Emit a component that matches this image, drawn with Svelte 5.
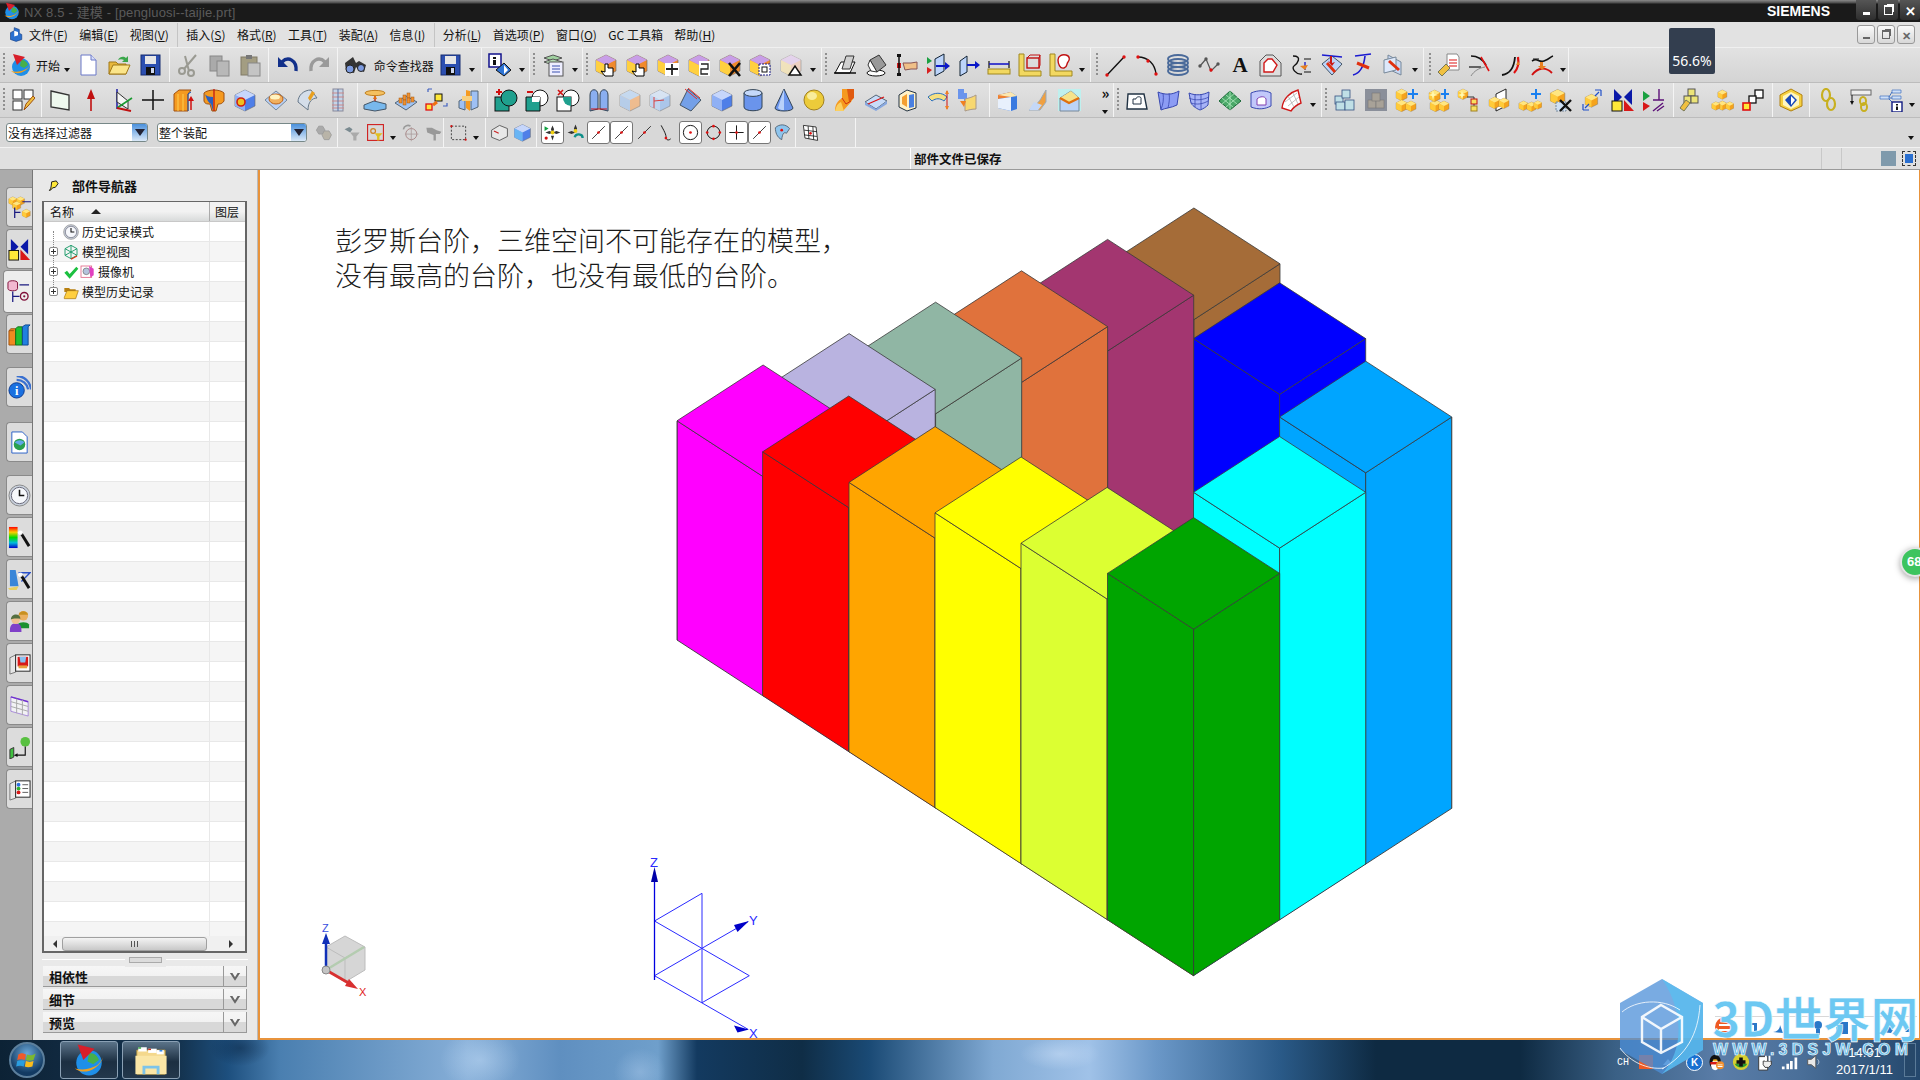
<script lang="ts">
	// icon helpers, everything is drawn on a 24x24 box
	const box = (t, l, r, tf = '') =>
		`<g transform="${tf}"><path d="M12 2 22 7v11l-10 5-10-5V7z" fill="${r}" stroke="#666" stroke-width=".6"/><path d="M2 7l10 5v11l-10-5z" fill="${l}"/><path d="M12 2 22 7 12 12 2 7z" fill="${t}"/></g>`;
	const gold = (tf = '') => box('#ffe680', '#ffcb3a', '#f5a31c', tf);
	const blue = (tf = '') => box('#c6d6fb', '#8fb0f5', '#4f7fe8', tf);
	const vc = (o = '') => box('#c89ee8', '#ffd040', '#f08a2c') + o;
	const line = (d, c = '#000', w = 1.4) => `<path d="${d}" fill="none" stroke="${c}" stroke-width="${w}"/>`;
	const dot = (x, y, c = '#e01010', r = 1.7) => `<circle cx="${x}" cy="${y}" r="${r}" fill="${c}"/>`;
	const wand = `<path d="M14 8l8 13" stroke="#111" stroke-width="3"/><path d="M12 5l2 2-2 2-2-2z" fill="#fff"/><circle cx="13" cy="7" r="2.4" fill="#fff" opacity=".9"/>`;
	const door = (inner) => `<path d="M2 6l6-3v18l-6 2z" fill="#e6e6e6" stroke="#777"/><rect x="8" y="3" width="15" height="17" fill="#fff" stroke="#222"/>${inner}`;

	const I: Record<string, string> = {
		globe: `<circle cx="12" cy="14" r="9" fill="#1f8fe8"/><path d="M12 7c4 0 6 2 7 5l-4 3-4-2z" fill="#47b04a"/><path d="M2 18c6 5 17 1 20-8-2 4-4 6-7 7-4 2-9 2-13 1z" fill="#f0a020"/><path d="M4 1l12 3-8 8z" fill="#d81f2a"/>`,
		newdoc: `<path d="M5 2h10l5 5v15H5z" fill="#fff" stroke="#6a78c8"/><path d="M15 2v5h5" fill="#d8def8" stroke="#6a78c8"/>`,
		open: `<path d="M2 9h7l2 2h8v10H2z" fill="#e8b83c" stroke="#a07818"/><path d="M6 12h17l-4 9H2z" fill="#fbe58a" stroke="#a07818"/><path d="M11 7c2-4 6-4 8-2l2-2v6h-6l2-2c-2-1-4-1-6 0z" fill="#3aa64a"/>`,
		save: `<rect x="3" y="2" width="19" height="20" fill="#2c4fb0" stroke="#162c70"/><rect x="7" y="3" width="11" height="8" fill="#e6e6e6"/><rect x="8" y="14" width="9" height="8" fill="#111"/><rect x="13" y="15" width="3" height="5" fill="#cfd8f0"/>`,
		cut: `<g fill="none" stroke="#9a9a92" stroke-width="2"><circle cx="6" cy="18" r="3"/><circle cx="15" cy="20" r="3"/><path d="M8 16 20 2M13 18 9 3"/></g>`,
		copy: `<rect x="3" y="3" width="12" height="15" fill="#aaa" stroke="#888"/><rect x="10" y="8" width="12" height="15" fill="#b8b8b8" stroke="#888"/>`,
		paste: `<rect x="3" y="4" width="16" height="18" fill="#a39d82" stroke="#807a66"/><rect x="8" y="2" width="6" height="4" fill="#777"/><rect x="10" y="10" width="12" height="13" fill="#c4c4c4" stroke="#888"/>`,
		undo: line('M6 9c6-6 15-2 14 9', '#12308a', 3.4) + `<path d="M2 4v10h10z" fill="#12308a"/>`,
		redo: line('M18 9c-6-6-15-2-14 9', '#9a9a9a', 3.4) + `<path d="M22 4v10H12z" fill="#9a9a9a"/>`,
		binoc: `<path d="M1 10 9 4l3 6 3-2 7 4-2 7-5-2-3-3-2 6-8-2z" fill="#333"/><circle cx="6" cy="16" r="4" fill="#7c9adf" stroke="#222"/><circle cx="17" cy="15" r="3.5" fill="#7c9adf" stroke="#222"/>`,
		info: `<rect x="1" y="1" width="12" height="13" fill="#fff" stroke="#11118a" stroke-width="1.5"/><path d="M5 4h3v2H5zM5 7h3v5H5z" fill="#111"/><path d="M16 10l7 7-7 6-8-6z" fill="#2e74d6" stroke="#111"/><path d="M16 12l4 5-4 4z" fill="#fff"/>`,
		layers: `<path d="M3 5l9-3 9 3-9 3z" fill="#9fd09f" stroke="#555"/><path d="M3 9l9-3 9 3-9 3z" fill="#b7dcb7" stroke="#555"/><rect x="8" y="9" width="14" height="14" fill="#eef" stroke="#555"/>${line('M11 13h8M11 16h8M11 19h8', '#3a50b0', 1.2)}`,
		vhand: vc(`<path d="M11 11h3v4h5v8h-8l-4-5 4 1z" fill="#fff" stroke="#000"/>`),
		vmove: vc(`<rect x="9" y="10" width="14" height="13" fill="#fff"/>${line('M16 11v11M10 16h12', '#222', 1.8)}`),
		vswap: vc(`<rect x="12" y="8" width="11" height="15" fill="#fff"/>${line('M14 11h7v5h-7v5h7', '#222', 1.3)}`),
		vx: vc(line('M11 10l11 13M22 10 11 23', '#111', 2.6)),
		vsel: vc(`<rect x="11" y="11" width="11" height="11" fill="#fff" stroke="#1a1a8a" stroke-dasharray="2 1"/><rect x="14" y="14" width="5" height="5" fill="none" stroke="#111"/>`),
		vtri: `<g opacity=".6">${box('#e8ccf6', '#ffe8a8', '#f8c8b0')}</g><path d="M10 22l6-9 6 9z" fill="#fff" stroke="#111" stroke-width="1.5"/>`,
		prism1: `<path d="M2 20 8 9h14l-5 11z" fill="#fff" stroke="#111"/><path d="M13 3h8l-4 13h-8z" fill="#d0d0d0" stroke="#333"/>${line('M1 20h22')}`,
		prism2: `<ellipse cx="12" cy="20" rx="9" ry="3" fill="#fff" stroke="#111"/><path d="M6 7 15 2l7 10-9 7z" fill="#999" stroke="#333"/><path d="M6 7l7 12-6-1-3-6z" fill="#fff" stroke="#333"/>`,
		pick: `<rect x="2" y="1" width="4" height="3" fill="#111"/><rect x="2" y="10" width="4" height="5" fill="#d01818"/><rect x="2" y="20" width="4" height="3" fill="#111"/>${line('M4 4v16')}<path d="M8 10h8l6-1v7h-6l-6 1z" fill="#f0c088" stroke="#855"/>`,
		parr: `<path d="M9 6 18 1v17l-9 5z" fill="#bcd4fa" stroke="#123"/><path d="M1 4l5 4-5 3z" fill="#1aa040"/><path d="M1 14l5 3-5 4z" fill="#d82020"/><path d="M10 12h9v-3l5 4-5 4v-3h-9z" fill="#0a18c8"/>`,
		parr2: `<path d="M3 8 10 3v16l-7 4z" fill="#bcd4fa" stroke="#123"/><path d="M10 11h8V8l5 4-5 4v-3h-8z" fill="#0a18c8"/>`,
		meas: line('M2 8v7M22 8v7', '#111', 1.2) + `<path d="M2 11h20" stroke="#1a1ac8" stroke-width="1.6"/><rect x="1" y="16" width="22" height="5" fill="#f2d860" stroke="#a08820"/>`,
		rul1: `<path d="M1 1h5v17h17v5H1z" fill="#f2d860" stroke="#a08820"/><rect x="9" y="5" width="12" height="10" fill="none" stroke="#c01010" stroke-width="1.4"/><path d="M9 5l3-3h10v10l-1 3M21 5l1-3" fill="none" stroke="#c01010"/>`,
		rul2: `<path d="M1 1h5v17h17v5H1z" fill="#f2d860" stroke="#a08820"/><path d="M9 7c0-4 4-6 8-5s4 5 2 7 0 5-4 6-6-4-6-8z" fill="#fff" stroke="#c01010" stroke-width="1.4"/>`,
		lin: line('M3 22 20 4', '#111', 1.4) + dot(3, 22) + dot(20, 4),
		arc: line('M3 4c10 0 17 7 18 17', '#111', 1.4) + dot(3, 4) + dot(21, 21) + dot(13, 8),
		spring: `<g fill="none" stroke="#4a6a9a" stroke-width="1.8"><ellipse cx="12" cy="6" rx="10" ry="4"/><ellipse cx="12" cy="10" rx="10" ry="4"/><ellipse cx="12" cy="14" rx="10" ry="4"/><ellipse cx="12" cy="18" rx="10" ry="4"/></g>`,
		pts: line('M3 13 9 6l5 12 7-7', '#555', 1.2) + dot(9, 6, '#555') + dot(3, 13, '#555') + dot(14, 17) + dot(21, 11, '#555'),
		txt: `<text x="12" y="19" font-family="Liberation Serif" font-weight="700" font-size="21" text-anchor="middle" fill="#111">A</text>`,
		shp: `<path d="M2 8 8 2h7l8 8v13H2z" fill="#ddd" stroke="#555"/><path d="M6 10l4-4h4l5 6-4 7H6z" fill="#fff" stroke="#d01818" stroke-width="1.4"/>`,
		crv1: line('M4 3c10 0 4 8 1 10s2 9 8 8', '#111', 1.4) + line('M15 6h7M15 19h7', '#111', 1) + line('M16 9v8', '#2020c8') + `<path d="M11 13l5 4 3-5z" fill="#e88020"/>`,
		crv2: `<path d="M2 11 12 3l10 8-10 11z" fill="#bcd4fa" stroke="#456"/>${line('M2 2 22 4', '#1a1ad0', 1.6)}${line('M7 10l8 9', '#e03010', 2.8)}<path d="M10 3v6l-2-1 4 5 3-4-3 1V3z" fill="#c81818"/>`,
		crv3: line('M4 3 20 1M2 22C10 20 13 12 14 3', '#1a1ad0', 1.6) + line('M6 10 18 15', '#e03010', 3),
		crv4: `<path d="M6 2l13 7v13L6 16z" fill="#c8d8f4" stroke="#789"/><path d="M2 7l12-3v13L2 20z" fill="#dde8fa" stroke="#789"/>${line('M7 8l10 9', '#e03010', 3)}`,
		wrdoc: `<path d="M10 1h10l2 3v13H10z" fill="#fff" stroke="#888"/>${line('M12 7h8M12 10h8M12 13h8', '#e88', 2)}<path d="M1 19l8-8 4 4-8 8z" fill="#f0c040" stroke="#775"/>`,
		cv1: line('M3 3c8 0 12 4 15 9', '#111', 1.6) + line('M1 14h12', '#111', 1.2) + line('M3 23c3-5 8-8 14-9', '#888', 1) + line('M13 4l8 14', '#e01010', 1.6),
		cv2: line('M3 22c8-1 12-7 13-18', '#111', 1.8) + line('M19 4c1 6 0 12-4 16', '#e01010', 2.2) + `<path d="M19 8l2 4-4 0z" fill="#e88020"/>`,
		cv3: line('M2 8c6-4 6 2 12 0s6-4 9-5', '#111', 1.6) + line('M2 22C8 14 16 14 22 20', '#d01010', 1.8) + line('M3 6h6', '#111', 1) + `<path d="M10 9h3v4h3l-4 4-4-4h2z" fill="#e88020"/>`,
		layout: `<rect x="2" y="2" width="9" height="9" fill="#fff" stroke="#333"/><rect x="13" y="2" width="9" height="9" fill="#fff" stroke="#333"/><rect x="2" y="13" width="9" height="9" fill="#fff" stroke="#333"/><path d="M13 22l2-6 7-8 2 2-7 8z" fill="#f0c040" stroke="#a05010"/>`,
		plane: `<path d="M3 3l18 4v15L3 19z" fill="#eef8ee" stroke="#333" stroke-width="1.3"/>`,
		vec: `<path d="M12 23V8" stroke="#c01010" stroke-width="1.6"/><path d="M12 1l4 10H8z" fill="#c01010"/>`,
		csys: line('M7 1v20', '#1010a0', 1.4) + `<path d="M7 4 18 13v8L7 14z" fill="#f4f4f4" stroke="#333"/>${line('M7 20 22 10', '#1a9a30', 1.6)}${line('M7 20l14 3', '#c01010', 1.8)}`,
		plus: line('M12 2v20M1 12h22', '#111', 1.5),
		ext: `<path d="M2 6 7 2h12l-3 4v17H2z" fill="#f59a20" stroke="#a05010"/><path d="M6 6v17M11 6v17" stroke="#ffd050"/>${line('M19 4 16 6v17', '#1a50b0', 1)}<path d="M19 22V12" stroke="#d01010" stroke-width="1.5"/><path d="M19 8l3 5h-6z" fill="#d01010"/>`,
		rev: `<path d="M2 5c4-4 16-4 20 0v8c-2 3-4 3-6 3l-2 7h-4l-2-7c-3 0-5 0-6-3z" fill="#f59a20" stroke="#a05010"/><path d="M2 5c2 1 2 8 7 11l2 7V9C7 9 4 8 2 5z" fill="#2a60c0"/>${line('M12 1v22', '#c01010', 1.2)}`,
		hole: blue() + `<circle cx="8" cy="14" r="4" fill="#f0c020" stroke="#d02010" stroke-width="1.6"/>`,
		boss: `<path d="M1 12 12 3l11 9-11 10z" fill="#b8d2fa" stroke="#789"/><ellipse cx="12" cy="11" rx="7" ry="5" fill="#f0b060" stroke="#c06010"/><ellipse cx="11" cy="9" rx="5" ry="2.5" fill="#fff3c0"/>`,
		fan: `<path d="M3 14c0-7 6-12 13-12l6 8c-5 0-9 4-9 12z" fill="#d4deea" stroke="#678"/><path d="M13 10l4-7 3 2-5 8z" fill="#e8a020"/>`,
		screw: `<rect x="7" y="1" width="10" height="22" fill="#c4d4e8" stroke="#889"/>${line('M6 5h12M6 9h12M6 13h12M6 17h12M6 20h12', '#cc8888', 1)}${line('M12 1v22', '#5a70a0', 1)}`,
		plate: `<ellipse cx="12" cy="5" rx="10" ry="2.6" fill="#f4c060" stroke="#c08020"/>${line('M12 8v6', '#d02010')}<path d="M12 7l2 4h-4z" fill="#e07010"/><path d="M1 17l10-4 12 3v5l-11 2-11-2z" fill="#78b8ec" stroke="#456"/>`,
		pegs: `<path d="M1 15 12 8l11 6-11 8z" fill="#a0c4f4" stroke="#567"/><g fill="#f09030" stroke="#a05810" stroke-width=".5"><rect x="5" y="10" width="3" height="5"/><rect x="9" y="7" width="3" height="5"/><rect x="13" y="5" width="3" height="5"/><rect x="9" y="12" width="3" height="5"/><rect x="13" y="10" width="3" height="5"/><rect x="17" y="9" width="3" height="5"/></g>`,
		pat: `<rect x="10" y="6" width="7" height="7" fill="#ffe838" stroke="#111"/><rect x="1" y="16" width="6" height="6" fill="#ffe838" stroke="#e01010" stroke-width="1.3"/><path d="M8 17l4-3" stroke="#f07010" stroke-width="3"/>${line('M3 1h4M3 1v3M18 18h4v-3', '#4060c0', 1.2)}`,
		mir: `<path d="M3 13l6-3v12l-6-2z" fill="#9ec0f4" stroke="#567"/><path d="M15 3h7v16l-7 3z" fill="#9ec0f4" stroke="#567"/><path d="M10 2l4 1v20l-4-3z" fill="#f59a20"/><path d="M6 8h10v5H6z" fill="#f8d080"/>`,
		bunite: `<rect x="1" y="9" width="14" height="14" fill="#1fa08e" stroke="#111"/><circle cx="15" cy="10" r="8" fill="#1fa08e" stroke="#111"/>${line('M5 1v6M2 4h6', '#d01010', 2)}`,
		bsub: `<circle cx="15" cy="10" r="8" fill="#fff" stroke="#111"/><path d="M1 9h14v14H1z" fill="#1fa08e" stroke="#111"/><path d="M7 9h8v1a8 8 0 0 1-1 4l-7 0z" fill="#fff"/>${line('M2 4h6', '#d01010', 2)}`,
		bint: `<circle cx="15" cy="10" r="8" fill="#fff" stroke="#111"/><rect x="1" y="9" width="14" height="14" fill="#fff" stroke="#111"/><path d="M7 9h8v9a8 8 0 0 1-8-9z" fill="#1fa08e"/>${line('M2 2l5 5M7 2 2 7', '#d01010', 1.6)}`,
		shell: `<path d="M3 23V7c0-7 8-7 8 0v14zM13 21V7c0-7 8-7 8 0v16z" fill="#8aaef0" stroke="#345"/>${line('M4 21h16', '#d01010', 1)}`,
		boxo: `<g opacity=".7">${box('#bcd8f8', '#a8c8f0', '#f8b070')}</g>`,
		boxt: `<g opacity=".75">${box('#d6e6fa', '#b8d4f8', '#9cc0f0')}</g>${line('M6 9v11M6 13l10-1', '#d84040', 1)}`,
		wedge: `<path d="M9 1l13 11-10 11L1 17z" fill="#74a0e8" stroke="#456"/>${line('M6 1l12 10M9 0l12 10', '#e03030', 1)}`,
		cube: blue(),
		cyl: `<path d="M3 5v14c0 5 18 5 18 0V5z" fill="#6a94ec" stroke="#345"/><ellipse cx="12" cy="5" rx="9" ry="3.4" fill="#c4d8fa" stroke="#345"/>`,
		cone: `<path d="M12 1 3 20c0 4 18 4 18 0z" fill="#6a94ec" stroke="#345"/><path d="M12 1 6 20c3 2 3 2 6 2z" fill="#b8d0fa"/>`,
		sph: `<circle cx="12" cy="12" r="10" fill="#eccb3a" stroke="#a08020"/><ellipse cx="10" cy="8" rx="5" ry="4" fill="#f8ec9c"/>`,
		swp: `<path d="M9 1h12v8l-3 5-8 9H2c0-7 3-10 7-13z" fill="#f59a20"/><path d="M14 1h7v9l-5 4z" fill="#e05a10"/><path d="M9 10l4 6 5-3" fill="none" stroke="#d03010"/><path d="M2 23c1-5 3-8 6-9l3 9z" fill="#fbd060"/>`,
		cut2: `<path d="M1 14 12 7l11 6-11 8z" fill="#c8dcf8" stroke="#567"/><path d="M1 14v3l11 6 11-7v-3l-11 8z" fill="#88a8e0"/>${line('M4 16 20 9', '#e01010', 1.2)}`,
		shl2: `<path d="M4 7l8-5 9 3v15l-9 3-8-4z" fill="#fff2c8" stroke="#234"/><path d="M7 9l5-3v13l-5-3z" fill="#f5a030"/><path d="M14 7l5-1v13l-5 1z" fill="#4a80e0"/>`,
		bend: `<path d="M2 9c6-5 14-5 19 0l-3 4c-4-3-8-3-12 0z" fill="#f6e080" stroke="#2a70c0"/>${line('M21 3v18', '#d01010', 1)}<path d="M21 2l2 4h-4zM21 22l2-4h-4z" fill="#f08020"/>`,
		flg: `<path d="M2 1h6v10H2zM8 5h3v8H8z" fill="#6a94ec"/><path d="M9 11c4-1 8-2 11-4v14c-4 0-8 1-11 2z" fill="#f8d870" stroke="#a98"/><path d="M4 13h6l-2 6z" fill="#f08020"/>`,
		bl1: `<path d="M3 7 16 4l6 4v13l-6 2-13-3z" fill="#3a7ae0"/><path d="M3 7 16 4v5L3 11z" fill="#f08030"/><path d="M3 7l13-3 6 4-6 1z" fill="#fbe7b0"/><path d="M3 11l13-2v14l-13-3z" fill="#e8f0fc"/>`,
		bl2: `<path d="M20 2v12l-6 8H3l7-6c4-2 6-8 10-14z" fill="#f0a040" stroke="#9ab"/><path d="M3 22l5-8 8 3-4 5z" fill="#c4d8f8"/>`,
		bl3: `<rect x="1" y="1" width="23" height="22" fill="#bff0ee"/><path d="M3 10 14 3l8 7v13H3z" fill="#bcd4f8" stroke="#789"/><path d="M3 10 14 3l8 7-10 5z" fill="#f6e38a"/><path d="M3 10l9 5 10-5" stroke="#e07010" stroke-width="2.4" fill="none"/>`,
		sf1: `<path d="M3 6h16l3 15H2z" fill="#fff" stroke="#234" stroke-width="1.4"/><path d="M8 16v-5h3c0-3 6-3 5 0v5z" fill="none" stroke="#234"/>`,
		sf2: `<path d="M2 4c7 3 14 3 21-1l-2 14c-6 3-12 3-16 5z" fill="#8c9cf4" stroke="#3848b0"/>${line('M7 5c1 6 0 12-2 16M13 5c1 6 0 10-1 15', '#3848b0', .8)}`,
		sf3: `<path d="M2 5c7 3 14 2 20-1l-1 13c-2 2-5 4-8 5-5-2-8-5-9-7z" fill="#a8b4f8" stroke="#3848b0"/>${line('M2 10c6 3 14 2 20-1M4 15c6 2 12 1 17-2M8 6l0 13M14 6l0 15', '#3848b0', .8)}`,
		sf4: `<path d="M1 13 12 3l11 10-11 9z" fill="#4aa868" stroke="#1d6a3a"/>${line('M4 10l11 9M8 7l11 9M12 3v19M4 16l13-11M8 19l13-11', '#bff0cc', .7)}`,
		sf5: `<path d="M2 5c7-3 14-3 20 0v13c-6 3-12 4-20 1z" fill="#c2c8fa" stroke="#3848b0"/><path d="M8 11c3-3 8-3 9 0v6H8z" fill="#fff" stroke="#8040b0"/>`,
		sf6: `<path d="M3 20C4 10 12 4 19 2l3 13c-5 2-8 5-10 8z" fill="#fff" stroke="#d01818" stroke-width="1.4"/>${line('M6 14l12-9M9 18l11-9M9 8l6 11M14 5l5 11', '#a8a8a8', .7)}`,
		comp: `<g fill="#bfdfe6" stroke="#345080" stroke-width=".8"><rect x="2" y="8" width="8" height="8"/><rect x="9" y="2" width="8" height="8"/><rect x="3" y="14" width="9" height="8"/><rect x="12" y="12" width="9" height="10"/></g>`,
		compg: `<rect x="1" y="1" width="22" height="22" fill="#8a8f9a"/><g fill="#a8a298" stroke="#777" stroke-width=".6"><rect x="4" y="12" width="8" height="8"/><rect x="12" y="12" width="8" height="8"/><rect x="8" y="5" width="8" height="8"/></g>`,
		gp: gold('translate(0 0) scale(.55)') + gold('translate(0 11) scale(.55)') + gold('translate(10 12) scale(.5)') + `<path d="M13 5h4V1h2v4h4v2h-4v4h-2V7h-4z" fill="#1a80f0"/>`,
		gsp: gold('translate(3 11) scale(.55)') + gold('translate(2 1) scale(.55)') + gold('translate(12 12) scale(.5)') + `<path d="M15 5h3V1h2v4h3v2h-3v4h-2V7h-3z" fill="#1a80f0"/><path d="M7 2l1 4 4 1-4 1-1 4-1-4-4-1 4-1z" fill="#fff9b0"/>`,
		gtr: gold('translate(0 0) scale(.5)') + `<path d="M5 3l1 3 3 1-3 1-1 3-1-3-3-1 3-1z" fill="#fff9b0"/>${line('M10 9h7v12', '#333', 1)}<rect x="14" y="11" width="6" height="5" fill="#f8e060" stroke="#c01010"/><rect x="14" y="18" width="6" height="5" fill="#f8e060" stroke="#a08020"/>`,
		gmr: `<path d="M9 6l10-5v17l-10 5z" fill="#fff" stroke="#222"/>` + gold('translate(1 8) scale(.55)') + gold('translate(11 9) scale(.5)'),
		grow: gold('translate(0 12) scale(.46)') + gold('translate(8 13) scale(.46)') + gold('translate(15 12) scale(.4)') + `<path d="M13 5h4V1h2v4h4v2h-4v4h-2V7h-4z" fill="#1a80f0"/>`,
		gx: gold('translate(0 0) scale(.72)') + `<path d="M7 14h10v9H7z" fill="#cfe0f4" stroke="#789" stroke-dasharray="2 1"/>${line('M11 12l11 11M22 12 11 23', '#111', 2.4)}`,
		gmv: gold('translate(4 5) scale(.62)') + line('M3 22v-6M3 22h6M5 20l4-4', '#2050c8', 1.2) + line('M21 2v6M21 2h-6M19 4l-4 4', '#2050c8', 1.2),
		cons: `<path d="M3 1l8 8-8 8zM21 1l-8 8 8 8z" fill="#0a18a8"/><rect x="1" y="13" width="10" height="10" fill="#ffe838" stroke="#111"/><path d="M13 23V12l10 11z" fill="#d81818"/>`,
		sym: `<path d="M2 3l7 5-7 5z" fill="#1aa040"/><path d="M2 14l7 4-7 5z" fill="#d81818"/>${line('M18 1v11M12 12h11M12 23 22 15M16 23l7-5', '#5c1078', 1.4)}`,
		wgs: `<rect x="9" y="1" width="7" height="7" fill="#ece478" stroke="#555"/><rect x="5" y="8" width="7" height="7" fill="#ece478" stroke="#555"/><rect x="12" y="8" width="7" height="7" fill="#ece478" stroke="#555"/><path d="M1 20l6-8 4 3-6 8z" fill="#f0c040" stroke="#775"/>`,
		gs3: gold('translate(7 1) scale(.45)') + gold('translate(7 12) scale(.45)') + gold('translate(1 13) scale(.4)') + gold('translate(15 13) scale(.4)'),
		gsq: `<rect x="14" y="2" width="8" height="8" fill="#fff" stroke="#111" stroke-width="1.3"/><rect x="8" y="8" width="7" height="7" fill="#fff" stroke="#111" stroke-width="1.3"/><rect x="2" y="15" width="7" height="7" fill="#ffe838" stroke="#e01010" stroke-width="1.6"/>`,
		hexb: `<path d="M12 1 23 7v11l-11 5-11-5V7z" fill="#f6d040" stroke="#b08010"/><path d="M12 4 20 8v9l-8 4-8-4V8z" fill="#fff6c0"/><path d="M12 6l6 6-6 7-6-7z" fill="#1848b8"/><path d="M12 8l4 4-4 5z" fill="#fff"/>`,
		chain: `<g fill="none" stroke="#c8b020" stroke-width="2.2"><ellipse cx="9" cy="7" rx="4" ry="6"/><ellipse cx="14" cy="16" rx="4" ry="6"/></g>`,
		chain2: `<rect x="3" y="2" width="20" height="5" fill="#eee" stroke="#666"/>${line('M4 7v8', '#111', 1)}<path d="M2 13h4l-2 4z" fill="#111"/><g fill="none" stroke="#c8b020" stroke-width="2"><ellipse cx="15" cy="13" rx="3" ry="4"/><ellipse cx="16" cy="19" rx="3" ry="4"/></g>`,
		treei: `<path d="M13 2h9v3h-9zM13 8h9v3h-9zM1 8h9v3H1z" fill="#cfe0f8" stroke="#4070c0" stroke-width=".7"/>${line('M10 9l3-5M10 10h3M10 11l4 4', '#4070c0', 1)}<rect x="13" y="14" width="10" height="10" fill="#fff" stroke="#111a80" stroke-width="1.4"/><path d="M17 16h2v1.500h-2zM17 18.500h2V22h-2z" fill="#111"/>`,
		// row 3
		fa: `<path d="M6 4h5l3 5-3 5H6L3 9z" fill="#aaa" stroke="#999"/><path d="M13 10h6l3 5-3 6h-6l-3-6z" fill="#b9b4a8" stroke="#999"/>`,
		ff: `<path d="M2 8l6-3 4 3-3 4z" fill="#7a8a90"/><path d="M9 12h12l-4 5v5h-4v-5z" fill="#aaa"/>`,
		fr: `<rect x="2" y="2" width="20" height="20" fill="none" stroke="#d02020" stroke-width="1.4"/><circle cx="9" cy="10" r="3" fill="none" stroke="#d08020" stroke-width="1.5"/><path d="M11 13h10l-4 4v5h-3v-5z" fill="#e0c020"/>`,
		fc: `<circle cx="13" cy="14" r="7" fill="none" stroke="#aa8888" stroke-width="1.2"/>${line('M13 5v18M5 14h17', '#aa9999', 1)}${line('M3 8c1-5 6-6 9-4', '#999', 2)}`,
		fg: `<path d="M3 6h7l6 3 6 2-2 3h-5v8h-3v-7L4 12z" fill="#999"/>`,
		fb: `<rect x="3" y="4" width="18" height="17" fill="none" stroke="#222" stroke-dasharray="2.500 2"/>${dot(3, 4, '#d01010', 1.4)}${dot(21, 21, '#d01010', 1.4)}`,
		fw: `<path d="M2 9l10-6 10 4v10l-10 5-10-4z" fill="#e8e8e8" stroke="#444"/><path d="M5 10l6 3" stroke="#c82020" stroke-width="1.4"/>`,
		fs: blue() + `<path d="M2 7l10 5v11l-10-5z" fill="#58b8f4" opacity=".7"/>`,
		sn1: `<path d="M12 3l2 5-2 5-2-5zM3 12l5-2 5 2-5 2zM12 12l5-2 5 2-5 2zM10 16h4l-2 6z" fill="#333"/>${dot(12, 12, '#f0d010', 2.4)}<path d="M2 4l5 3-5 3z" fill="#10a040"/>${dot(4, 19, '#d01010', 2)}`,
		sn2: `<path d="M12 2l2 5-2 5-2-5zM2 12l5-2 5 2-5 2z" fill="#333"/>${dot(12, 10, '#f0d010', 2.4)}${line('M11 18c1-5 10-5 10 1', '#10908a', 3)}`,
		sl: line('M4 20 20 4', '#111', 1) + dot(12, 12),
		sc1: line('M4 3c3 6 7 12 6 16', '#111', 1.2) + line('M10 19c1 3 4 3 6 1', '#111', 1.2) + dot(10, 19),
		sc2: line('M12 3v20', '#111', 1.2) + line('M2 18C4 9 20 9 22 18', '#111', 1.2) + dot(12, 11),
		so: `<circle cx="12" cy="12" r="9" fill="none" stroke="#111" stroke-width="1.2"/>${dot(12, 12)}`,
		sq: `<circle cx="12" cy="12" r="8" fill="none" stroke="#111" stroke-width="1.2"/>${dot(12, 4)}${dot(12, 20)}${dot(4, 12)}${dot(20, 12)}`,
		sx: line('M12 3v18M3 12h18', '#111', 1.2) + dot(12, 12),
		sf: `<path d="M3 6c5-5 13-5 18 1l-4 6c-3-2-5 0-6 8-6-3-8-9-8-15z" fill="#8ec4ec" stroke="#456"/>${dot(11, 9)}`,
		grid: `<path d="M3 3l16 2 2 17-16-3z" fill="#fff" stroke="#111"/>${line('M9 4l1 16M15 5l1 16M4 9l16 2M4 15l16 2', '#111', 1)}${dot(12, 13)}`,
		// navigator tabs
		tasm: gold('translate(0 0) scale(.42)') + gold('translate(8 0) scale(.42)') + gold('translate(4 5) scale(.42)') + gold('translate(14 13) scale(.42)') + line('M7 12v11M7 17h6M15 6h9', '#1a1a80', 1.3),
		tpart: `<path d="M1 3c0-3 10-3 10 0v6c0 3-10 3-10 0z" fill="#f2b8d0" stroke="#80103a"/>${line('M6 12v11M6 17h7M13 5h10', '#1a1a80', 1.3)}<circle cx="18" cy="17" r="4" fill="none" stroke="#80103a" stroke-width="1.4"/>${dot(18, 17, '#80103a', 1.2)}`,
		tbook: `<path d="M1 8l2-2h5v17H1zM1 8h5" fill="#f08a20" stroke="#a05010"/><path d="M8 6l2-2h5v19H8z" fill="#20c030" stroke="#107018"/><path d="M15 4l3-2h5l-2 2v19h-6z" fill="#2080e0" stroke="#104890"/>`,
		twifi: `<circle cx="9" cy="15" r="8" fill="#1a70e0" stroke="#0a3a90"/><text x="9" y="20" font-family="Liberation Serif" font-weight="700" font-size="13" text-anchor="middle" fill="#fff">i</text>${line('M9 4c6 0 11 4 12 10', '#3a70d0', 2.4)}${line('M9 0c8 0 14 6 15 14', '#3a70d0', 2.4)}`,
		tweb: `<path d="M4 1h11l5 5v17H4z" fill="#fff" stroke="#2a60c8"/><circle cx="12" cy="14" r="6" fill="#2aa050"/><path d="M7 12c3-3 8-3 10 0l-4 3z" fill="#60a8e8"/>`,
		clock: `<circle cx="12" cy="12" r="11" fill="#c8d0dc" stroke="#888"/><circle cx="12" cy="12" r="8.500" fill="#f6f8fc" stroke="#667"/>${line('M12 6v6h5', '#111', 1.6)}`,
		trb: `<defs><linearGradient id="rbw" x1="0" y1="0" x2="0" y2="1"><stop offset="0" stop-color="#f00"/><stop offset=".25" stop-color="#fc0"/><stop offset=".5" stop-color="#0d0"/><stop offset=".75" stop-color="#0bd"/><stop offset="1" stop-color="#00c"/></linearGradient></defs><rect x="1" y="1" width="9" height="22" fill="url(#rbw)"/>${wand}`,
		tbw: `<path d="M2 2h6l3 17H2z" fill="#3a86d8"/><path d="M0 21l11-2-2 4H2z" fill="#e8d060"/>${line('M11 5h12L14 14', '#2a50c8', 1.4)}${wand}`,
		tppl: `<circle cx="16" cy="6" r="5" fill="#eab060"/><path d="M11 5c1-5 9-5 10 0z" fill="#c89020"/><path d="M10 15c2-3 10-3 12 0v4H10z" fill="#1a9030"/><path d="M2 21c0-5 2-7 6-7s6 2 6 7v2H2z" fill="#8040c8"/><circle cx="8" cy="10" r="4.500" fill="#f0c090"/><path d="M3 10c0-7 10-7 10-1-3 0-7-1-10 1z" fill="#557040"/>`,
		tdr: door(`<rect x="10" y="5" width="11" height="10" fill="#d81818"/><path d="M12 5h7l-1 6h-5z" fill="#8ac0f0"/><rect x="11" y="14" width="9" height="3" fill="#e8a040"/>`),
		tgr: `<path d="M3 3l18 5v15L3 18z" fill="#f2f2f4" stroke="#8050d0" stroke-width=".6"/>${line('M3 3l18 5', '#7030d0', 1.6)}${line('M3 8l18 5M3 13l18 5M9 5v15M15 6v16', '#a8a8a8', 1)}`,
		tdg: `<path d="M2 14l4-2v10l-4 2z" fill="#40c040" stroke="#333"/><circle cx="18" cy="6" r="5" fill="#58c040"/>${line('M18 11v9H9', '#111', 1.2)}<path d="M6 20l4-2v4z" fill="#111"/>`,
		tdl: door(`${dot(11, 7, '#2a70e0', 2)}${dot(11, 11, '#30b030', 2)}${dot(11, 15, '#d81818', 2)}${line('M15 7h6M15 11h6M15 15h6', '#333', .8)}`),
		tcube: `<g fill="none" stroke="#1a9a68" stroke-width="1.4"><path d="M12 2 21 7v10l-9 5-9-5V7z"/><path d="M3 7l9 5 9-5M12 12v10M12 2v10M3 17l9-5 9 5"/></g>${line('M12 23l9-5', '#e03010', 1.8)}`,
		tcam: `<rect x="3" y="3" width="16" height="17" fill="#fff" stroke="#e06080" stroke-width="1.2"/><circle cx="11" cy="11" r="5" fill="#b4c4dc" stroke="#666"/><path d="M15 3l7 4v10l-5 3z" fill="#e040c0"/>`,
		tfold: `<path d="M2 6h7l2 2h8v4H2z" fill="#b88010"/><path d="M2 20l4-10h17l-4 12H2z" fill="#ffcf40" stroke="#a07010"/>`,
		check: `<path d="M2 13l4-3 4 5L20 4l3 3L10 22z" fill="#1cc040"/>`
	};

	// toolbar layout, x positions come from the group widths
	const row1 = [
		{ w: 170, pad: 0, grip: true, items: ['N:globe', 'T:开始', '^', 'newdoc', 'open', 'save'] },
		{ w: 99, pad: 3, items: ['cut', 'copy', 'paste'] },
		{ w: 69, pad: 4, items: ['undo', 'redo'] },
		{ w: 144, pad: 3, items: ['binoc', 'T:命令查找器', 'save', '^'] },
		{ w: 48, pad: 3, items: ['info', '^'] },
		{ w: 53, pad: 0, grip: true, items: ['layers', '^'] },
		{ w: 239, pad: 0, grip: true, items: ['vhand', 'vhand', 'vmove', 'vswap', 'vx', 'vsel', 'vtri', '^'] },
		{ w: 269, pad: 0, grip: true, items: ['prism1', 'prism2', 'pick', 'parr', 'parr2', 'meas', 'rul1', 'rul2', '^'] },
		{ w: 333, pad: 2, grip: true, items: ['lin', 'arc', 'spring', 'pts', 'txt', 'shp', 'crv1', 'crv2', 'crv3', 'crv4', '^'] },
		{ w: 145, pad: 2, grip: true, items: ['wrdoc', 'cv1', 'cv2', 'cv3', '^'] }
	];
	const row2 = [
		{ w: 42, pad: 0, grip: true, items: ['layout'] },
		{ w: 316, pad: 3, items: ['plane', 'vec', 'csys', 'plus', 'ext', 'rev', 'hole', 'boss', 'fan', 'screw'] },
		{ w: 130, pad: 2, items: ['plate', 'pegs', 'pat', 'mir'] },
		{ w: 502, pad: 3, items: ['bunite', 'bsub', 'bint', 'shell', 'boxo', 'boxt', 'wedge', 'cube', 'cyl', 'cone', 'sph', 'swp', 'cut2', 'shl2', 'bend', 'flg'] },
		{ w: 124, pad: 2, items: ['bl1', 'bl2', 'bl3', '>>'] },
		{ w: 208, pad: 0, grip: true, items: ['sf1', 'sf2', 'sf3', 'sf4', 'sf5', 'sf6', '^'] },
		{ w: 352, pad: 0, grip: true, items: ['comp', 'compg', 'gp', 'gsp', 'gtr', 'gmr', 'grow', 'gx', 'gmv', 'cons', 'sym'] },
		{ w: 99, pad: 2, items: ['wgs', 'gs3', 'gsq'] },
		{ w: 37, pad: 3, items: ['hexb'] },
		{ w: 110, pad: 4, noline: true, items: ['chain', 'chain2', 'treei', '^'] }
	];
	const row3 = [
		{ w: 106, pad: 2.5, items: ['ff', 'fr', '^', 'fc', 'fg'] },
		{ w: 42, pad: 2.5, items: ['fb', '^'] },
		{ w: 51, pad: 1.5, items: ['fw', 'fs'] },
		{ w: 259, pad: 3.5, items: ['+sn1', 'sn2', '+sl', '+sl', 'sl', 'sc1', '+so', 'sq', '+sx', '+sl', 'sf'] },
		{ w: 60, pad: 2.5, items: ['grid'] }
	];
	const menus = [
		['文件', 'F'], ['编辑', 'E'], ['视图', 'V'], null,
		['插入', 'S'], ['格式', 'R'], ['工具', 'T'], ['装配', 'A'], ['信息', 'I'], null,
		['分析', 'L'], ['首选项', 'P'], ['窗口', 'O'], ['GC 工具箱', ''], ['帮助', 'H']
	];
	const tabs = [
		{ i: 'tasm' }, { i: 'cons' }, { i: 'tpart', active: true }, { i: 'tbook' },
		{ i: 'twifi', gap: true }, { i: 'tweb', gap: true, wide: true }, { i: 'clock', gap: true },
		{ i: 'trb' }, { i: 'tbw' }, { i: 'tppl' }, { i: 'tdr' }, { i: 'tgr' }, { i: 'tdg' }, { i: 'tdl' }
	];
	const tree = [
		{ label: '历史记录模式', icons: ['clock'] },
		{ label: '模型视图', icons: ['tcube'], exp: true },
		{ label: '摄像机', icons: ['check', 'tcam'], exp: true },
		{ label: '模型历史记录', icons: ['tfold'], exp: true }
	];
	const rows = Array.from({ length: 36 }, (_, i) => tree[i] || null);

	// penrose stairs, painted back to front. x,y is the left corner of the top face
	const W = 86.1;
	const H = 55.8;
	const towers = [
		{ c: '#a56c38', x: 1107.8, y: 263.8 },
		{ c: '#0000ff', x: 1193.5, y: 338.6 },
		{ c: '#00a5ff', x: 1279.6, y: 417 },
		{ c: '#a33670', x: 1021.5, y: 295.2 },
		{ c: '#e0723c', x: 935.4, y: 326.6 },
		{ c: '#90b6a4', x: 849.5, y: 358 },
		{ c: '#b9b3e0', x: 763, y: 389.4 },
		{ c: '#ff00ff', x: 677, y: 420.8 },
		{ c: '#ff0000', x: 762.6, y: 451.8 },
		{ c: '#ffa500', x: 849, y: 482.4 },
		{ c: '#ffff00', x: 935, y: 512.8 },
		{ c: '#dcff32', x: 1021, y: 543.2 },
		{ c: '#00ffff', x: 1193.5, y: 492.3 },
		{ c: '#00a500', x: 1107.5, y: 573.4 }
	];
	const pts = (a) => a.map((p) => p.join(',')).join(' ');
	const faces = (t) => {
		const L = [t.x, t.y], T = [t.x + W, t.y - H], R = [t.x + 2 * W, t.y], B = [t.x + W, t.y + H];
		return {
			top: pts([L, T, R, B]),
			left: pts([L, B, [B[0], 1100], [L[0], 1100]]),
			right: pts([B, R, [R[0], 1100], [B[0], 1100]])
		};
	};
	const outline = '677,100 677,640 1193.4,975.7 1451.8,808.3 1451.8,100';
</script>

{#snippet icon(name)}
	<svg class="ico" viewBox="0 0 24 24">{@html I[name]}</svg>
{/snippet}

{#snippet toolbar(groups, small)}
	{#each groups as g}
		<div class="tb-group" class:noline={g.noline} style="width:{g.w}px;padding-left:{g.pad}px">
			{#if g.grip}<span class="grip"></span>{/if}
			{#each g.items as it}
				{#if it === '^'}
					<span class="caret"></span>
				{:else if it === '>>'}
					<span class="more">»<i class="caret"></i></span>
				{:else if it.startsWith('T:')}
					<span class="tb-text">{it.slice(2)}</span>
				{:else if it.startsWith('N:')}
					<span class="cell narrow">{@render icon(it.slice(2))}</span>
				{:else if it.startsWith('+')}
					<span class="cell toggled" class:sm={small}>{@render icon(it.slice(1))}</span>
				{:else}
					<span class="cell" class:sm={small}>{@render icon(it)}</span>
				{/if}
			{/each}
		</div>
	{/each}
{/snippet}

<div class="app">
	<header class="titlebar">
		<svg class="title-logo" viewBox="0 0 24 24">{@html I.globe}</svg>
		<span class="title-text">NX 8.5 - 建模 - [pengluosi--taijie.prt]</span>
		<span class="siemens">SIEMENS</span>
		<div class="win-btns">
			<span class="win-btn"><i class="g-min"></i></span>
			<span class="win-btn"><i class="g-max"></i></span>
			<span class="win-btn close">✕</span>
		</div>
	</header>

	<nav class="menubar">
		<svg class="menu-logo" viewBox="0 0 24 24"><path d="M10 1l8 3v6l4 2v8l-9 3-9-3V9l6-3z" fill="#2a70d0" stroke="#123a80"/><path d="M10 6l6 2v5l-6 2z" fill="#fff"/></svg>
		{#each menus as m}
			{#if m}
				<span class="menu-item">{m[0]}{#if m[1]}(<u>{m[1]}</u>){/if}</span>
			{:else}
				<span class="menu-sep"></span>
			{/if}
		{/each}
		<div class="mdi-btns">
			<span class="mdi"><i class="g-min"></i></span>
			<span class="mdi"><i class="g-max"></i></span>
			<span class="mdi">✕</span>
		</div>
	</nav>

	<div class="toolrow">{@render toolbar(row1, false)}</div>
	<div class="toolrow">{@render toolbar(row2, false)}</div>
	<div class="toolrow third">
		<div class="tb-group selects">
			<div class="sel"><span>没有选择过滤器</span><b></b></div>
			<div class="sel two"><span>整个装配</span><b></b></div>
			<span class="cell sm">{@render icon('fa')}</span>
		</div>
		{@render toolbar(row3, true)}
		<span class="row-end caret"></span>
	</div>

	<div class="statusbar">
		<span class="status-left"></span>
		<span class="status-msg">部件文件已保存</span>
		<span class="status-a"></span>
		<span class="status-b"></span>
		<span class="status-ico flag"></span>
		<span class="status-ico fit"><i></i></span>
	</div>

	<main class="workspace">
		<aside class="tabs">
			{#each tabs as t}
				<div class="tab" class:active={t.active} class:gap={t.gap} class:wide={t.wide}>{@render icon(t.i)}</div>
			{/each}
		</aside>

		<section class="panel">
			<div class="panel-head">
				<svg viewBox="0 0 24 24" class="pin"><path d="M8 4l10-2 4 6-6 8-6 1-3 4-4 2 3-5 1-5z" fill="#ffe838" stroke="#111" stroke-width="2"/></svg>
				<span>部件导航器</span>
			</div>
			<div class="tree">
				<div class="tree-head">
					<div class="th-name">名称<i class="sort"></i></div>
					<div class="th-layer">图层</div>
				</div>
				<div class="tree-body">
					<span class="tree-guide"></span>
					{#each rows as r, i}
						<div class="tree-row" class:alt={i % 2 === 1}>
							<div class="td-name">
								{#if r}
									{#if r.exp}<span class="exp"></span>{:else}<span class="exp none"></span>{/if}
									{#each r.icons as ic}
										<span class="tree-ico">{@render icon(ic)}</span>
									{/each}
									<span class="tree-label">{r.label}</span>
								{/if}
							</div>
							<div class="td-layer"></div>
						</div>
					{/each}
				</div>
				<div class="hscroll">
					<span class="arr l"></span>
					<span class="thumb"><i></i></span>
					<span class="arr r"></span>
				</div>
			</div>
			<div class="splitter"><i></i></div>
			{#each ['相依性', '细节', '预览'] as a}
				<div class="acc">
					<span class="acc-title">{a}</span>
					<span class="acc-chev"><svg viewBox="0 0 14 10"><path d="M1 1h3l3 5 3-5h3L7 10z" fill="#666"/></svg></span>
				</div>
			{/each}
		</section>

		<section class="canvas">
			<svg class="scene" viewBox="260 170 1657 868" width="1657" height="868">
				<defs>
					<clipPath id="sil"><polygon points={outline} /></clipPath>
				</defs>

				<text class="note" x="335" y="251">彭罗斯台阶，三维空间不可能存在的模型，</text>
				<text class="note" x="335" y="286">没有最高的台阶，也没有最低的台阶。</text>

				<g clip-path="url(#sil)" stroke="#3a3a3a" stroke-width=".8" stroke-linejoin="round">
					{#each towers as t}
						{@const f = faces(t)}
						<polygon points={f.left} fill={t.c} />
						<polygon points={f.right} fill={t.c} />
						<polygon points={f.top} fill={t.c} />
					{/each}
				</g>
				<path d="M677 421V640L1193.400 975.700 1451.800 808.300V417" fill="none" stroke="#3a3a3a" stroke-width=".9" />

				<!-- datum csys -->
				<g fill="none" stroke="#2a2aff" stroke-width="1">
					<path d="M654.500 921 702 893.300V1002.700L749.300 975.700 654.500 921M654.500 975.700 748 921.700M654.500 975.700 748 1029.300" />
				</g>
				<path d="M654.500 980V872" stroke="#0000e0" stroke-width="1.3" />
				<path d="M654.500 867l3.500 15h-7z" fill="#0000a8" />
				<path d="M749 921l-15 4 3.500 7z" fill="#0000c8" />
				<path d="M749 1029.500l-15-4 3.500 7z" fill="#0000c8" />
				<text class="axis" x="650" y="867">Z</text>
				<text class="axis" x="749" y="925">Y</text>
				<text class="axis" x="749" y="1038">X</text>

				<!-- view triad -->
				<g fill="#d6d6d6" stroke="#bdbdbd" stroke-width="1">
					<path d="M345 936 365 947V970L345 982 326 970V947z" />
					<path d="M326 947 345 958 365 947M345 958V982" fill="none" />
				</g>
				<path d="M326 970 364 947" stroke="#b4ccb0" stroke-width="2.5" />
				<path d="M326 970V940" stroke="#1030b8" stroke-width="2.5" />
				<path d="M326 933l4 11h-8z" fill="#1030b8" />
				<path d="M326 970 352 985" stroke="#d83030" stroke-width="3" />
				<path d="M358 989 345 986l4-7z" fill="#d83030" />
				<circle cx="326" cy="970" r="4" fill="#c4c4c4" stroke="#888" />
				<text class="mini" fill="#3a50e0" x="322" y="932">Z</text>
				<text class="mini" fill="#e02020" x="359" y="996">X</text>

				<!-- ime bar behind the watermark -->
				<path d="M1715 1016.500H1917" stroke="#d8d8d8" />
				<circle cx="1725" cy="1027" r="10" fill="#ee5a24" />
				<path d="M1719 1024h12v2h-12zM1719 1029h12v2h-12z" fill="#fff" />
				<g fill="#2a78c8">
					<path d="M1750 1023h7v2h-7zM1754 1025h3v8h-3z" />
					<path d="M1773 1032c4 0 7-3 7-7l3 8z" />
					<circle cx="1818" cy="1025" r="4" />
					<path d="M1816 1029h4v6h-4zM1836 1022h12v12h-12z" />
					<path d="M1880 1032l8-10 5 8-2 3z" />
					<path d="M1905 1032l7-8 1 8z" />
				</g>
			</svg>
		</section>
	</main>

	<footer class="taskbar">
		<div class="orb">
			<svg viewBox="0 0 24 24"><path d="M4 7c3-2 5-1 7 0l-1 5c-2-1-5-1-7 0z" fill="#f05a28"/><path d="M12 7c3 1 5 1 8-1l-2 6c-2 1-5 1-7 0z" fill="#7cb82f"/><path d="M3 13c2-1 5-1 7 0l-1 5c-2-1-5-1-7 0z" fill="#2a9ee0"/><path d="M11 13c2 1 5 1 7 0l-1 5c-3 1-5 1-7 0z" fill="#fbbc1c"/></svg>
		</div>
		<div class="task-btn"><svg viewBox="0 0 24 24">{@html I.globe}</svg></div>
		<div class="task-btn">
			<svg viewBox="0 0 24 24"><path d="M2 5h20v17H2z" fill="#f4d88c" stroke="#b8963c" stroke-width=".6"/><path d="M3 3h6v3H3z" fill="#fff"/><path d="M3 3h2v1H3z" fill="#2aa030"/><path d="M10 4h6v3h-6z" fill="#fff"/><path d="M10 4h2v1h-2z" fill="#c83020"/><path d="M16 5h5v3h-5z" fill="#fff"/><path d="M18 5h2v1h-2z" fill="#2a80e0"/><path d="M1 9h22v13H1z" fill="#fae6a6"/><path d="M6 16h12v6h-2v-4H8v4H6z" fill="#7cc4ea"/></svg>
		</div>

		<div class="tray">
			<span class="ch">CH</span>
			<span class="t-s"></span>
			<span class="t-up"></span>
			<span class="t-k">K</span>
			<svg class="t-ico" viewBox="0 0 20 22"><ellipse cx="9" cy="11" rx="7" ry="9" fill="#111"/><ellipse cx="9" cy="15" rx="5" ry="6" fill="#fff"/><path d="M3 11h12v3H3z" fill="#d81818"/><ellipse cx="9" cy="9" rx="3" ry="1.500" fill="#f0b020"/><circle cx="15" cy="15" r="5" fill="#f09030"/><path d="M12 14h6v1h-6zM12 16h6v1h-6z" fill="#fff"/></svg>
			<svg class="t-ico" viewBox="0 0 20 20"><circle cx="10" cy="10" r="9" fill="#d6cf30"/><path d="M3 12a8 8 0 0 0 14 0z" fill="#2a9a30"/><path d="M8 5h4v3h3v4h-3v3H8v-3H5V8h3z" fill="#111"/></svg>
			<svg class="t-ico" viewBox="0 0 20 20"><path d="M3 4h10v15H3z" fill="#fff" stroke="#333"/><path d="M8 9h9v4l-3 3H10l-2-3z" fill="#eee" stroke="#333"/><path d="M11 3v6M15 3v6" stroke="#fff" stroke-width="2"/></svg>
			<svg class="t-ico" viewBox="0 0 20 20"><path d="M1 15h3v3H1zM6 12h3v6H6zM10 9h3v9h-3zM15 5h3v13h-3z" fill="#fff"/></svg>
			<svg class="t-ico" viewBox="0 0 20 20"><path d="M3 7h4l5-4v14l-5-4H3z" fill="#e8e8e8" stroke="#555"/><path d="M14 7c2 2 2 4 0 6" fill="none" stroke="#bcd"/></svg>
			<div class="clock-box"><span>14:01</span><span>2017/1/11</span></div>
			<span class="show-desktop"></span>
		</div>
	</footer>

	<div class="zoom-tip">56.6%</div>
	<div class="badge">68</div>

	<svg class="watermark" viewBox="1600 970 320 110" width="320" height="110">
		<path d="M1662 979 1703 1003V1050L1662 1074 1620 1050V1003z" fill="#4c8fd8" opacity=".75" />
		<path d="M1662 979 1703 1003V1050L1662 1074c20-20 24-60 0-95z" fill="#58bff0" opacity=".75" />
		<path d="M1661 1005 1682 1017V1042L1661 1053 1642 1042V1017zM1642 1017 1661 1029 1682 1017M1661 1029V1053" fill="none" stroke="#fff" stroke-width="2.4" opacity=".9" />
		<path d="M1622 1012c14-12 40-14 58-2M1700 1005c-2 30-14 50-38 64M1620 1048c10 14 28 22 44 20" fill="none" stroke="#fff" stroke-width="1" opacity=".8" />
		<text class="wm-big" x="1712" y="1037">3D世界网</text>
		<text class="wm-small" x="1713" y="1055" textLength="195">WWW.3DSJW.COM</text>
	</svg>
</div>

<style>
	:global(body) {
		margin: 0;
		overflow: hidden;
		background: #000;
	}

	.app {
		position: relative;
		width: 1920px;
		height: 1080px;
		display: flex;
		flex-direction: column;
		overflow: hidden;
		font-family: 'Noto Sans CJK SC', 'Liberation Sans', sans-serif;
		font-size: 12px;
		color: #111;
		background: #dcdcdc;
	}

	/* title bar */
	.titlebar {
		height: 22px;
		flex: none;
		display: flex;
		align-items: center;
		background: linear-gradient(#8a8a8a 0, #4a4a4a 3px, #1a1a1a 4px, #1a1a1a 100%);
		box-sizing: border-box;
	}

	.title-logo {
		width: 18px;
		height: 18px;
		margin-left: 3px;
	}

	.title-text {
		margin-left: 3px;
		color: #5a5a5a;
		font-family: 'Liberation Sans', 'Noto Sans CJK SC', sans-serif;
		font-size: 13px;
		letter-spacing: 0.15px;
	}

	.siemens {
		margin-left: auto;
		color: #fff;
		font-family: 'Liberation Sans', sans-serif;
		font-weight: 700;
		font-size: 14px;
		margin-right: 26px;
	}

	.win-btns {
		display: flex;
		gap: 2px;
		height: 20px;
		margin-bottom: 2px;
	}

	.win-btn {
		width: 20px;
		display: flex;
		align-items: center;
		justify-content: center;
		color: #fff;
		font-size: 13px;
		font-weight: 700;
		background: linear-gradient(#555, #2e2e2e);
		border-radius: 0 0 3px 3px;
	}

	.g-min {
		display: block;
		width: 7px;
		height: 3px;
		background: currentColor;
		margin-top: 7px;
	}

	.g-max {
		display: block;
		width: 7px;
		height: 7px;
		border: 1px solid currentColor;
		border-top-width: 2px;
		box-shadow: 2px -2px 0 -1px currentColor;
	}

	/* menu */
	.menubar {
		height: 26px;
		flex: none;
		display: flex;
		align-items: center;
		background: #e2e2e2;
		border-bottom: 1px solid #f0f0f0;
		box-sizing: border-box;
		padding-left: 8px;
	}

	.menu-logo {
		width: 15px;
		height: 15px;
		margin-right: 6px;
	}

	.menu-item {
		margin-right: 11.4px;
		white-space: nowrap;
		line-height: 14px;
	}

	.menu-sep {
		width: 1px;
		height: 24px;
		background: #c4c4c4;
		margin: 0 8px 0 -3px;
	}

	.mdi-btns {
		margin-left: auto;
		margin-right: 5px;
		display: flex;
		gap: 2px;
		color: #666;
	}

	.mdi {
		width: 16px;
		height: 17px;
		border: 1px solid #999;
		border-radius: 3px;
		background: linear-gradient(#fafafa, #d8d8d8);
		display: flex;
		align-items: center;
		justify-content: center;
		font-size: 11px;
		font-weight: 700;
	}

	.mdi .g-min {
		width: 7px;
		height: 2px;
	}

	.mdi .g-max {
		width: 6px;
		height: 6px;
	}

	/* toolbars */
	.toolrow {
		height: 35px;
		flex: none;
		display: flex;
		align-items: center;
		background: linear-gradient(#e2e2e2, #d4d4d4);
		border-bottom: 1px solid #bcbcbc;
		box-sizing: border-box;
	}

	.toolrow.third {
		height: 30px;
		background: #d8d8d8;
		position: relative;
		border-bottom: 1px solid #f2f2f2;
	}

	.tb-group {
		flex: none;
		display: flex;
		align-items: center;
		height: 100%;
		box-sizing: border-box;
		border-right: 1px solid #f4f4f4;
	}

	.tb-group.noline {
		border-right: none;
	}

	.grip {
		flex: none;
		width: 2px;
		height: 24px;
		margin: 0 3px;
		background: repeating-linear-gradient(#8f8f8f 0 2px, transparent 2px 4px);
	}

	.cell {
		flex: none;
		width: 30.8px;
		height: 26px;
		display: flex;
		align-items: center;
		justify-content: center;
		box-sizing: border-box;
	}

	.cell.narrow {
		width: 26px;
	}

	.cell.sm {
		width: 23px;
		height: 23px;
	}

	.cell.toggled {
		background: #fff;
		border: 1px solid #777;
		border-radius: 3px;
	}

	.ico {
		width: 24px;
		height: 24px;
		display: block;
	}

	.sm .ico {
		width: 19px;
		height: 19px;
	}

	.caret {
		flex: none;
		width: 0;
		height: 0;
		margin: 10px 3px 0 3px;
		border: 3px solid transparent;
		border-top: 4px solid #111;
		border-bottom: none;
	}

	.more {
		flex: none;
		display: flex;
		flex-direction: column;
		align-items: center;
		font-size: 15px;
		line-height: 14px;
		font-weight: 700;
		width: 14px;
		margin-left: 14px;
	}

	.tb-text {
		flex: none;
		margin: 0 1px 0 2px;
		font-size: 12px;
	}

	.selects {
		width: 338px;
		padding-left: 6px;
		gap: 9px;
	}

	.sel {
		flex: none;
		width: 142px;
		height: 19px;
		box-sizing: border-box;
		background: #fff;
		border: 1px solid #788;
		border-radius: 3px;
		display: flex;
		align-items: center;
		justify-content: space-between;
		overflow: hidden;
		padding-left: 1px;
	}

	.sel.two {
		width: 150px;
	}

	.sel b {
		width: 15px;
		height: 100%;
		display: flex;
		align-items: center;
		justify-content: center;
		background: linear-gradient(#4a90dc, #dbe9f8);
		position: relative;
	}

	.sel b::after {
		content: '';
		border: 5px solid transparent;
		border-top: 7px solid #223;
		border-bottom: none;
	}

	.selects .cell.sm {
		margin-left: -4.5px;
	}

	.row-end {
		position: absolute;
		right: 3px;
		top: 8px;
	}

	/* status */
	.statusbar {
		height: 22px;
		flex: none;
		display: flex;
		align-items: center;
		background: #e0e0e0;
		border-bottom: 1px solid #9a9a9a;
		box-sizing: border-box;
	}

	.status-left {
		width: 911px;
		height: 100%;
		border-right: 1px solid #fff;
		box-sizing: border-box;
	}

	.status-msg {
		width: 910px;
		padding-left: 3px;
		font-size: 12.500px;
		font-weight: 700;
		box-sizing: border-box;
	}

	.status-a,
	.status-b {
		height: 100%;
		width: 20px;
		box-sizing: border-box;
		border-left: 1px solid #c8c8c8;
	}

	.status-ico {
		height: 15px;
		box-sizing: border-box;
	}

	.flag {
		width: 15px;
		margin-left: 20px;
		background: #7f9aac;
	}

	.fit {
		width: 14px;
		margin-left: 6px;
		border: 1px dashed #333;
		padding: 2px;
	}

	.fit i {
		display: block;
		height: 100%;
		background: #2a6fd0;
	}

	/* main area */
	.workspace {
		flex: 1;
		display: flex;
		min-height: 0;
		height: 870px;
	}

	.tabs {
		width: 33px;
		flex: none;
		background: #ababab;
		padding-top: 17px;
		box-sizing: border-box;
		border-right: 1px solid #777;
		display: flex;
		flex-direction: column;
		align-items: flex-end;
	}

	.tab {
		flex: none;
		width: 26px;
		height: 40px;
		margin-bottom: 2px;
		box-sizing: border-box;
		background: #dcdcdc;
		border: 1px solid #8a8a8a;
		border-right: none;
		border-radius: 4px 0 0 4px;
		display: flex;
		align-items: center;
		justify-content: center;
	}

	.tab.gap {
		margin-top: 11px;
	}

	.tab.wide {
		margin-top: 13px;
	}

	.tab.active {
		width: 29px;
		height: 43px;
		margin-top: -1px;
		margin-bottom: 1px;
		background: #ededed;
	}

	.tab .ico {
		width: 23px;
		height: 23px;
	}

	.panel {
		width: 225px;
		flex: none;
		background: #e9e9e9;
		box-sizing: border-box;
		border-right: 1px solid #bbb;
	}

	.panel-head {
		height: 31px;
		display: flex;
		align-items: center;
		padding-left: 15px;
		font-size: 13px;
		font-weight: 700;
		box-sizing: border-box;
	}

	.pin {
		width: 11px;
		height: 11px;
		margin-right: 13px;
	}

	.tree {
		width: 205px;
		height: 752px;
		margin-left: 9px;
		box-sizing: border-box;
		border: 2px solid #666;
		border-top-width: 1px;
		background: #fff;
		display: flex;
		flex-direction: column;
	}

	.tree-head {
		height: 20px;
		flex: none;
		display: flex;
		background: linear-gradient(#f2f2f2 0, #f2f2f2 50%, #d8dada 100%);
		border-bottom: 1px solid #c8c8c8;
		box-sizing: border-box;
	}

	.th-name {
		width: 166px;
		padding-left: 6px;
		box-sizing: border-box;
		border-right: 1px solid #aaa;
		display: flex;
		align-items: center;
	}

	.sort {
		margin-left: 17px;
		border: 5px solid transparent;
		border-bottom: 5px solid #222;
		border-top: none;
	}

	.th-layer {
		flex: 1;
		padding-left: 5px;
		display: flex;
		align-items: center;
	}

	.tree-body {
		flex: 1;
		position: relative;
		overflow: hidden;
	}

	.tree-guide {
		position: absolute;
		left: 9px;
		top: 9px;
		height: 62px;
		border-left: 1px dotted #888;
	}

	.tree-row {
		height: 20px;
		display: flex;
		box-sizing: border-box;
		border-bottom: 1px solid #e8e8e8;
		background: #fff;
	}

	.tree-row.alt {
		background: #f5f5f5;
	}

	.td-name {
		width: 166px;
		box-sizing: border-box;
		border-right: 1px solid #e8e8e8;
		display: flex;
		align-items: center;
		padding-left: 5px;
		position: relative;
	}

	.exp {
		width: 9px;
		height: 9px;
		flex: none;
		box-sizing: border-box;
		border: 1px solid #888;
		border-radius: 2px;
		background:
			linear-gradient(#333, #333) center / 5px 1px no-repeat,
			linear-gradient(#333, #333) center / 1px 5px no-repeat,
			#fff;
		margin-right: 3px;
		position: relative;
	}

	.exp.none {
		border-color: transparent;
		background: none;
	}

	.tree-ico {
		width: 16px;
		height: 16px;
		flex: none;
		margin-right: 0;
	}

	.tree-ico .ico {
		width: 16px;
		height: 16px;
	}

	.td-name .exp + .tree-ico {
		margin-left: 2px;
	}

	.tree-label {
		margin-left: 3px;
		white-space: nowrap;
	}

	.hscroll {
		height: 15px;
		flex: none;
		display: flex;
		align-items: center;
		background: #f0f0f0;
	}

	.arr {
		width: 0;
		height: 0;
		border: 4px solid transparent;
	}

	.arr.l {
		border-right: 4px solid #333;
		margin-left: 5px;
	}

	.arr.r {
		border-left: 4px solid #333;
		margin-left: 22px;
	}

	.thumb {
		width: 145px;
		height: 14px;
		margin-left: 5px;
		box-sizing: border-box;
		background: linear-gradient(#f4f4f4, #c8c8c8);
		border: 1px solid #a0a0a0;
		border-radius: 3px;
		display: flex;
		align-items: center;
		justify-content: center;
	}

	.thumb i {
		width: 7px;
		height: 6px;
		background: repeating-linear-gradient(90deg, #555 0 1px, transparent 1px 3px);
	}

	.splitter {
		height: 13px;
		margin: 0 9px;
		display: flex;
		align-items: center;
		justify-content: center;
		background: linear-gradient(#fff, #fff) center / 100% 1px no-repeat;
		border: 0;
	}

	.splitter i {
		width: 33px;
		height: 6px;
		box-sizing: border-box;
		background: #dcdcdc;
		border: 1px solid #aaa;
		box-shadow: 0 0 0 4px #e9e9e9;
	}

	.acc {
		width: 204px;
		height: 21px;
		margin: 0 0 2px 10px;
		box-sizing: border-box;
		display: flex;
		justify-content: space-between;
		align-items: center;
		background: linear-gradient(#f6f6f6 0, #f2f2f2 50%, #d8d8d8 51%, #d8d8d8 100%);
		border-bottom: 1px solid #999;
		border-right: 1px solid #999;
		font-size: 13px;
		font-weight: 700;
	}

	.acc-title {
		padding-left: 6px;
	}

	.acc-chev {
		width: 23px;
		height: 100%;
		box-sizing: border-box;
		border-left: 1px solid #999;
		display: flex;
		align-items: center;
		justify-content: center;
	}

	.acc-chev svg {
		width: 12px;
		height: 9px;
	}

	/* graphics window */
	.canvas {
		flex: 1;
		background: #fff;
		border-left: 2px solid #e8933c;
		border-right: 1px solid #e8933c;
		border-bottom: 2px solid #e8933c;
		box-sizing: border-box;
		overflow: hidden;
	}

	.scene {
		display: block;
	}

	.note {
		font-size: 27px;
		fill: #1a1a1a;
		font-family: 'Noto Sans CJK SC', sans-serif;
		font-weight: 300;
	}

	.axis {
		font-family: 'Liberation Sans', sans-serif;
		font-size: 13px;
		fill: #2a2aff;
	}

	.mini {
		font-family: 'Liberation Sans', sans-serif;
		font-size: 11px;
	}

	/* taskbar */
	.taskbar {
		height: 40px;
		flex: none;
		display: flex;
		align-items: center;
		position: relative;
		background:
			radial-gradient(ellipse 40px 30px at 480px 20px, rgba(200, 225, 250, 0.45), transparent),
			radial-gradient(ellipse 26px 24px at 640px 32px, rgba(190, 215, 245, 0.35), transparent),
			radial-gradient(ellipse 30px 18px at 240px 8px, rgba(12, 40, 70, 0.55), transparent),
			radial-gradient(ellipse 40px 16px at 1060px 14px, rgba(220, 235, 255, 0.4), transparent),
			linear-gradient(90deg,
				#0c2235 0, #10283e 55px, #14334f 180px, #1d4f7e 228px, #4a7fb0 280px, #87afd8 467px,
				#5f8fc0 560px, #6f9fcb 658px, #133a60 697px, #0f2d46 802px, #1a4a75 869px, #80a9d3 993px,
				#a0c2e8 1089px, #6b98c8 1156px, #2a5a88 1280px, #0e2a42 1376px, #0e2a42 1520px, #3a6085 1615px,
				#5a7da8 1720px, #4a6f99 1800px, #24476c 1920px);
	}

	.orb {
		width: 36px;
		height: 36px;
		margin-left: 9px;
		border-radius: 50%;
		box-sizing: border-box;
		border: 2px solid #5c7f9c;
		background: radial-gradient(circle at 50% 30%, #6aa7d8, #123a62 70%);
		display: flex;
		align-items: center;
		justify-content: center;
	}

	.orb svg {
		width: 26px;
		height: 26px;
	}

	.task-btn {
		width: 58px;
		height: 38px;
		margin-left: 4px;
		box-sizing: border-box;
		border: 1px solid #8aa0b4;
		border-radius: 3px;
		background: linear-gradient(#5b7388, #1c2f42 55%, #23384c);
		display: flex;
		align-items: center;
		justify-content: center;
	}

	.orb + .task-btn {
		margin-left: 15px;
	}

	.task-btn svg {
		width: 34px;
		height: 34px;
	}

	.tray {
		position: absolute;
		left: 1617px;
		top: 0;
		right: 0;
		height: 40px;
		display: flex;
		align-items: center;
		color: #fff;
	}

	.ch {
		font-size: 10px;
		width: 22px;
		margin-top: 4px;
		font-family: 'Liberation Mono', monospace;
	}

	.t-s {
		width: 14px;
		height: 14px;
		background: #ee5a24;
		margin-right: 10px;
		margin-top: 4px;
	}

	.t-up {
		border: 5px solid transparent;
		border-bottom: 6px solid #9fd0ee;
		border-top: none;
		margin-right: 13px;
		margin-top: 4px;
	}

	.t-k {
		width: 15px;
		height: 15px;
		border-radius: 50%;
		background: #1a70d0;
		border: 1.500px solid #fff;
		font: 700 10px/15px 'Liberation Sans', sans-serif;
		text-align: center;
		margin-right: 4px;
		margin-top: 4px;
	}

	.t-ico {
		width: 18px;
		height: 18px;
		margin-right: 6.5px;
		margin-top: 4px;
		flex: none;
	}

	.clock-box {
		width: 66px;
		display: flex;
		flex-direction: column;
		align-items: center;
		font-family: 'Liberation Sans', sans-serif;
		font-size: 13px;
		line-height: 17px;
		margin-left: 2px;
		padding-top: 2px;
	}

	.show-desktop {
		width: 12px;
		height: 34px;
		margin-left: 6px;
		box-sizing: border-box;
		border: 1px solid #5a7a98;
		background: #27486a;
	}

	/* overlays */
	.zoom-tip {
		position: absolute;
		left: 1669px;
		top: 28px;
		width: 46px;
		height: 46px;
		box-sizing: border-box;
		padding-top: 23px;
		border-radius: 2px;
		background: #333e4f;
		color: #fff;
		text-align: center;
		font-size: 14px;
		line-height: 20px;
		font-family: 'Noto Sans', sans-serif;
	}

	.badge {
		position: absolute;
		left: 1900px;
		top: 547px;
		width: 30px;
		height: 30px;
		box-sizing: border-box;
		border-radius: 50%;
		border: 2px solid #e4e4e4;
		background: #3dc45e;
		box-shadow: 0 2px 6px rgba(0, 0, 0, 0.35);
		color: #fff;
		font: 700 13px/26px 'Liberation Sans', sans-serif;
		padding-left: 5px;
	}

	.watermark {
		position: absolute;
		left: 1600px;
		top: 970px;
		pointer-events: none;
	}

	.wm-big {
		font-family: 'Noto Sans CJK SC', sans-serif;
		font-weight: 700;
		font-size: 48px;
		fill: #6cc8f2;
		stroke: #fff;
		stroke-width: 0.6px;
	}

	.wm-small {
		font-family: 'Liberation Sans', sans-serif;
		font-weight: 700;
		font-size: 16px;
		fill: #62bdea;
		stroke: #fff;
		stroke-width: 0.6px;
	}
</style>
